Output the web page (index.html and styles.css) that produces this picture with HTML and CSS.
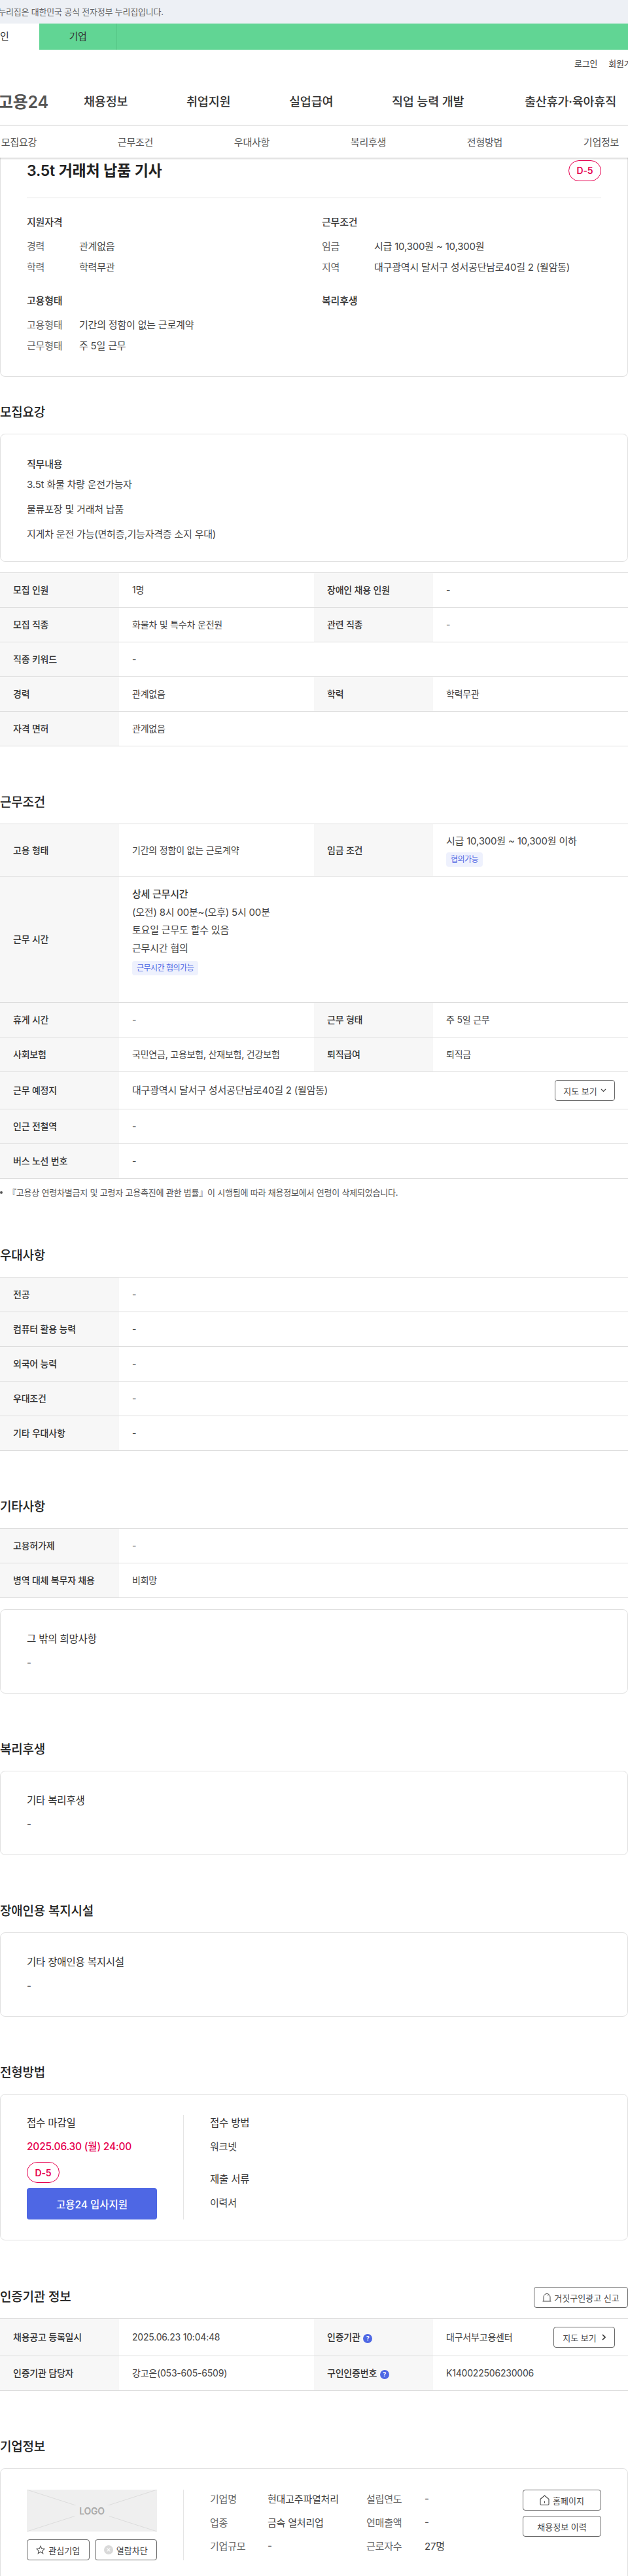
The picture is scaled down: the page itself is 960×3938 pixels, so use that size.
FILE: index.html
```html
<!DOCTYPE html>
<html lang="ko">
<head>
    <meta charset="UTF-8">
    <meta name="viewport" content="width=device-width, initial-scale=1.0">
    <title>3.5t 거래처 납품 기사 - 고용24</title>
    <link rel="stylesheet" href="styles.css">
</head>
<body>
    <div class="gov-bar"><span>이 누리집은 대한민국 공식 전자정부 누리집입니다.</span></div>

    <div class="user-tabs">
        <a class="user-tab active">개인</a>
        <a class="user-tab">기업</a>
    </div>

    <div class="util-links">
        <a>로그인</a>
        <a>회원가입</a>
    </div>

    <div class="gnb">
        <a class="logo">고용24</a>
        <a>채용정보</a>
        <a>취업지원</a>
        <a>실업급여</a>
        <a>직업 능력 개발</a>
        <a>출산휴가·육아휴직</a>
    </div>

    <div class="anchor-tabs">
        <a>모집요강</a>
        <a>근무조건</a>
        <a>우대사항</a>
        <a>복리후생</a>
        <a>전형방법</a>
        <a>기업정보</a>
    </div>

    <div class="card summary">
        <div class="summary-head">
            <h2>3.5t 거래처 납품 기사</h2>
            <span class="dday">D-5</span>
        </div>
        <div class="summary-grid">
            <div class="summary-block">
                <h3>지원자격</h3>
                <dl>
                    <dt>경력</dt><dd>관계없음</dd>
                    <dt>학력</dt><dd>학력무관</dd>
                </dl>
            </div>
            <div class="summary-block">
                <h3>근무조건</h3>
                <dl>
                    <dt>임금</dt><dd>시급 10,300원 ~ 10,300원</dd>
                    <dt>지역</dt><dd>대구광역시 달서구 성서공단남로40길 2 (월암동)</dd>
                </dl>
            </div>
            <div class="summary-block">
                <h3>고용형태</h3>
                <dl>
                    <dt>고용형태</dt><dd>기간의 정함이 없는 근로계약</dd>
                    <dt>근무형태</dt><dd>주 5일 근무</dd>
                </dl>
            </div>
            <div class="summary-block">
                <h3>복리후생</h3>
            </div>
        </div>
    </div>

    <section class="section s-recruit">
        <h2 class="section-title">모집요강</h2>
        <div class="card job-desc">
            <h4>직무내용</h4>
            <p>3.5t 화물 차량 운전가능자</p>
            <p>물류포장 및 거래처 납품</p>
            <p>지게차 운전 가능(면허증,기능자격증 소지 우대)</p>
        </div>
        <table class="info-table after-card">
            <colgroup><col class="col-th"><col class="col-td"><col class="col-th"><col class="col-td"></colgroup>
            <tr><th>모집 인원</th><td>1명</td><th>장애인 채용 인원</th><td>-</td></tr>
            <tr><th>모집 직종</th><td>화물차 및 특수차 운전원</td><th>관련 직종</th><td>-</td></tr>
            <tr><th>직종 키워드</th><td colspan="3">-</td></tr>
            <tr><th>경력</th><td>관계없음</td><th>학력</th><td>학력무관</td></tr>
            <tr><th>자격 면허</th><td colspan="3">관계없음</td></tr>
        </table>
    </section>

    <section class="section">
        <h2 class="section-title">근무조건</h2>
        <table class="info-table">
            <colgroup><col class="col-th"><col class="col-td"><col class="col-th"><col class="col-td"></colgroup>
            <tr class="row-pay">
                <th>고용 형태</th>
                <td>기간의 정함이 없는 근로계약</td>
                <th>임금 조건</th>
                <td><span class="big">시급 10,300원 ~ 10,300원 이하</span><span class="tag">협의가능</span></td>
            </tr>
            <tr class="row-hours">
                <th>근무 시간</th>
                <td colspan="3">
                    <strong>상세 근무시간</strong>
                    <div>(오전) 8시 00분~(오후) 5시 00분</div>
                    <div>토요일 근무도 할수 있음</div>
                    <div>근무시간 협의</div>
                    <span class="tag">근무시간 협의가능</span>
                </td>
            </tr>
            <tr><th>휴게 시간</th><td>-</td><th>근무 형태</th><td>주 5일 근무</td></tr>
            <tr><th>사회보험</th><td>국민연금, 고용보험, 산재보험, 건강보험</td><th>퇴직급여</th><td>퇴직금</td></tr>
            <tr class="row-place">
                <th>근무 예정지</th>
                <td colspan="3">
                    <div class="with-btn">
                        <span class="big">대구광역시 달서구 성서공단남로40길 2 (월암동)</span>
                        <button class="btn map-open">지도 보기
                            <svg width="9" height="6" viewBox="0 0 9 6"><path d="M1 1l3.500 3.500L8 1" fill="none" stroke="#444" stroke-width="1.200"/></svg>
                        </button>
                    </div>
                </td>
            </tr>
            <tr><th>인근 전철역</th><td colspan="3">-</td></tr>
            <tr><th>버스 노선 번호</th><td colspan="3">-</td></tr>
        </table>
        <p class="note">『고용상 연령차별금지 및 고령자 고용촉진에 관한 법률』이 시행됨에 따라 채용정보에서 연령이 삭제되었습니다.</p>
    </section>

    <section class="section">
        <h2 class="section-title">우대사항</h2>
        <table class="info-table">
            <colgroup><col class="col-th"><col class="col-td"><col class="col-th"><col class="col-td"></colgroup>
            <tr><th>전공</th><td colspan="3">-</td></tr>
            <tr><th>컴퓨터 활용 능력</th><td colspan="3">-</td></tr>
            <tr><th>외국어 능력</th><td colspan="3">-</td></tr>
            <tr><th>우대조건</th><td colspan="3">-</td></tr>
            <tr><th>기타 우대사항</th><td colspan="3">-</td></tr>
        </table>
    </section>

    <section class="section">
        <h2 class="section-title">기타사항</h2>
        <table class="info-table">
            <colgroup><col class="col-th"><col class="col-td"><col class="col-th"><col class="col-td"></colgroup>
            <tr><th>고용허가제</th><td colspan="3">-</td></tr>
            <tr><th>병역 대체 복무자 채용</th><td colspan="3">비희망</td></tr>
        </table>
        <div class="card note-card etc-card">
            <h4>그 밖의 희망사항</h4>
            <p>-</p>
        </div>
    </section>

    <section class="section">
        <h2 class="section-title">복리후생</h2>
        <div class="card note-card">
            <h4>기타 복리후생</h4>
            <p>-</p>
        </div>
    </section>

    <section class="section">
        <h2 class="section-title">장애인용 복지시설</h2>
        <div class="card note-card">
            <h4>기타 장애인용 복지시설</h4>
            <p>-</p>
        </div>
    </section>

    <section class="section">
        <h2 class="section-title">전형방법</h2>
        <div class="card apply-card">
            <div class="apply-left">
                <h4>접수 마감일</h4>
                <p class="deadline">2025.06.30 (월) 24:00</p>
                <span class="dday">D-5</span>
                <button class="btn-apply">고용24 입사지원</button>
            </div>
            <div class="apply-right">
                <h4>접수 방법</h4>
                <p>워크넷</p>
                <h4>제출 서류</h4>
                <p>이력서</p>
            </div>
        </div>
    </section>

    <section class="section s-cert">
        <div class="title-row">
            <h2 class="section-title">인증기관 정보</h2>
            <button class="btn report">
                <svg width="14" height="14" viewBox="0 0 14 14"><path d="M2 13V6.500a5 5 0 0 1 10 0V13M0.500 13h13M9.500 3l-1 1.500" fill="none" stroke="#444" stroke-width="1"/></svg>
                거짓구인광고 신고
            </button>
        </div>
        <table class="info-table cert">
            <colgroup><col class="col-th"><col class="col-td"><col class="col-th"><col class="col-td"></colgroup>
            <tr>
                <th>채용공고 등록일시</th>
                <td>2025.06.23 10:04:48</td>
                <th>인증기관 <span class="help">?</span></th>
                <td>
                    <div class="with-btn">
                        <span>대구서부고용센터</span>
                        <button class="btn map-link">지도 보기
                            <svg width="6" height="10" viewBox="0 0 6 10"><path d="M1 1l4 4-4 4" fill="none" stroke="#333" stroke-width="1.600"/></svg>
                        </button>
                    </div>
                </td>
            </tr>
            <tr>
                <th>인증기관 담당자</th>
                <td>강고은(053-605-6509)</td>
                <th>구인인증번호 <span class="help">?</span></th>
                <td>K140022506230006</td>
            </tr>
        </table>
    </section>

    <section class="section">
        <h2 class="section-title">기업정보</h2>
        <div class="card company-card">
            <div class="company-left">
                <div class="logo-box">
                    <svg class="logo-x" viewBox="0 0 199 64" preserveAspectRatio="none"><path d="M0 0L199 64M199 0L0 64" stroke="#dcdcdc" stroke-width="1"/></svg>
                    <span>LOGO</span>
                </div>
                <div class="company-actions">
                    <button class="btn">
                        <svg width="14" height="14" viewBox="0 0 16 16"><path d="M8 1.500l2 4.400 4.800.5-3.600 3.200 1 4.700L8 11.400l-4.200 2.900 1-4.700L1.200 6.400 6 5.900z" fill="none" stroke="#555" stroke-width="1.300"/></svg>
                        관심기업
                    </button>
                    <button class="btn">
                        <svg width="14" height="14" viewBox="0 0 16 16"><circle cx="8" cy="8" r="8" fill="#d9d9d9"/><path d="M5.300 5.300l5.400 5.400M10.700 5.300l-5.400 5.400" stroke="#fff" stroke-width="1.400"/></svg>
                        열람차단
                    </button>
                </div>
            </div>
            <dl class="company-info">
                <dt>기업명</dt><dd>현대고주파열처리</dd>
                <dt>설립연도</dt><dd>-</dd>
                <dt>업종</dt><dd>금속 열처리업</dd>
                <dt>연매출액</dt><dd>-</dd>
                <dt>기업규모</dt><dd>-</dd>
                <dt>근로자수</dt><dd>27명</dd>
            </dl>
            <div class="company-links">
                <button class="btn">
                    <svg width="15" height="16" viewBox="0 0 15 16"><path d="M1 6.500L7.500 1 14 6.500V14a1.200 1.200 0 0 1-1.200 1.200H2.200A1.200 1.200 0 0 1 1 14zM7.500 9.500v3" fill="none" stroke="#444" stroke-width="1.100"/></svg>
                    홈페이지
                </button>
                <button class="btn">채용정보 이력</button>
            </div>
        </div>
    </section>
</body>
</html>
```

FILE: styles.css
```css
* {
    box-sizing: border-box;
}

html,
body {
    margin: 0;
    padding: 0;
    overflow-x: hidden;
}

body {
    width: 960px;
    font-family: Inter, "Noto Sans CJK KR", "Noto Sans", sans-serif;
    font-size: 15px;
    color: #444;
    background-color: #fff;
    letter-spacing: -0.2px;
}

h2,
h3,
h4,
p,
dl,
dd {
    margin: 0;
}

.gov-bar {
    height: 36px;
    line-height: 36px;
    font-size: 13px;
    color: #666;
    background-color: #edf0f5;
    overflow: hidden;
    white-space: nowrap;
}

.gov-bar span {
    margin-left: -18px;
}

.user-tabs {
    display: flex;
    height: 40px;
    margin-left: -60px;
    background-color: #61d594;
}

.user-tab {
    width: 119px;
    line-height: 40px;
    text-align: center;
    border-right: 1px solid #55c585;
    color: #333;
}

.user-tab.active {
    width: 120px;
    background-color: #fff;
    border-right: none;
}

.util-links {
    display: flex;
    gap: 17px;
    height: 40px;
    padding-left: 878px;
    align-items: center;
    font-size: 13px;
    white-space: nowrap;
    overflow: hidden;
}

.gnb {
    display: flex;
    align-items: center;
    height: 76px;
    font-size: 18.500px;
    font-weight: 500;
    color: #333;
    white-space: nowrap;
    border-bottom: 1px solid #e8e8e8;
}

.gnb a {
    width: 157px;
}

.gnb .logo {
    width: 131px;
    margin-left: -3px;
    font-size: 25px;
    font-weight: 600;
    color: #555;
}

.gnb a:nth-child(5) {
    width: 203px;
}

.anchor-tabs {
    position: relative;
    display: grid;
    grid-template-columns: repeat(6, 178px);
    width: 1068px;
    height: 49px;
    margin-left: -60px;
    align-items: center;
    text-align: center;
    color: #555;
    background-color: #fff;
    box-shadow: 0 1px 3px rgba(0, 0, 0, 0.25);
}

.card {
    border: 1px solid #e0e0e0;
    border-radius: 8px;
    background-color: #fff;
}

.summary {
    height: 335px;
    padding: 0 40px;
    border-top: none;
    border-radius: 0 0 8px 8px;
}

.summary-head {
    display: flex;
    justify-content: space-between;
    align-items: center;
    height: 62px;
    padding-bottom: 22px;
    border-bottom: 1px solid #e8e8e8;
}

.summary-head h2 {
    font-size: 23px;
    font-weight: 600;
    line-height: 40px;
    color: #222;
}

.dday {
    display: inline-flex;
    align-items: center;
    justify-content: center;
    width: 50px;
    height: 32px;
    font-size: 14px;
    font-weight: 600;
    color: #e6004f;
    border: 1px solid #e6004f;
    border-radius: 16px;
}

.summary-grid {
    display: grid;
    grid-template-columns: 451px 1fr;
    grid-template-rows: 120px auto;
    padding-top: 26px;
}

.summary-block h3 {
    margin-bottom: 15px;
    font-size: 15px;
    font-weight: 500;
    line-height: 22px;
    color: #333;
}

.summary-block dl {
    display: grid;
    grid-template-columns: 80px 1fr;
    row-gap: 10px;
    line-height: 22px;
}

.summary-block dt {
    color: #666;
}

.section {
    padding-top: 74px;
}

.s-recruit {
    padding-top: 43px;
}

.section-title {
    font-size: 19px;
    font-weight: 500;
    line-height: 24px;
    color: #222;
}

.job-desc {
    height: 196px;
    margin-top: 20px;
    padding: 35px 40px 0;
}

.job-desc h4 {
    font-size: 15px;
    font-weight: 500;
    line-height: 22px;
    color: #333;
}

.note-card h4,
.apply-card h4 {
    font-size: 15.500px;
    font-weight: 400;
    line-height: 22px;
    color: #333;
}

.job-desc p {
    margin-top: 16px;
    line-height: 22px;
}

.job-desc h4 + p {
    margin-top: 9px;
}

.info-table {
    width: 960px;
    margin-top: 20px;
    table-layout: fixed;
    border-collapse: collapse;
    border-top: 1px solid #ddd;
    font-size: 14px;
}

.info-table.after-card {
    margin-top: 16px;
}

.col-th {
    width: 182px;
}

.col-td {
    width: 298px;
}

.info-table th,
.info-table td {
    height: 53px;
    padding: 0 20px;
    border-bottom: 1px solid #ddd;
    text-align: left;
    vertical-align: middle;
    line-height: 22px;
}

.info-table th {
    font-weight: 500;
    color: #333;
    background-color: #f7f7f7;
}

.big {
    font-size: 15px;
}

.tag {
    display: block;
    width: fit-content;
    height: 22px;
    padding: 0 7px;
    font-size: 12px;
    line-height: 22px;
    letter-spacing: -0.5px;
    color: #4e67e4;
    background-color: #eef1fd;
    border-radius: 4px;
}

.row-pay th,
.row-pay td {
    height: 80px;
}

.row-pay .tag {
    margin-top: 6px;
}

.info-table .row-hours th {
    height: 193px;
}

.info-table .row-hours td {
    vertical-align: top;
    padding-top: 13px;
    font-size: 15px;
    line-height: 27.700px;
}

.row-hours strong {
    font-weight: 500;
    color: #333;
}

.info-table .row-hours .tag {
    margin-top: 5px;
    font-size: 12px;
    line-height: 22px;
}

.row-place th,
.row-place td {
    height: 57px;
}

.with-btn {
    display: flex;
    align-items: center;
    justify-content: space-between;
}

.btn {
    display: inline-flex;
    align-items: center;
    justify-content: center;
    gap: 5px;
    height: 32px;
    padding: 0;
    font-family: inherit;
    font-size: 13px;
    letter-spacing: 0;
    color: #444;
    background-color: #fff;
    border: 1px solid #666;
    border-radius: 4px;
    white-space: nowrap;
}

.map-open {
    width: 92px;
}

.map-link {
    width: 94px;
    gap: 8px;
}

.note {
    position: relative;
    margin-top: 10px;
    padding-left: 12px;
    font-size: 13px;
    line-height: 22px;
    color: #555;
}

.note::before {
    content: "";
    position: absolute;
    left: 0;
    top: 9px;
    width: 4px;
    height: 4px;
    border-radius: 50%;
    background-color: #555;
}

.note-card {
    height: 129px;
    margin-top: 20px;
    padding: 34px 40px 0;
}

.note-card p {
    margin-top: 14px;
    line-height: 22px;
}

.etc-card {
    margin-top: 17px;
}

.apply-card {
    display: flex;
    height: 224px;
    margin-top: 20px;
    padding: 31px 40px 0;
}

.apply-left {
    width: 240px;
    height: 160px;
    padding-right: 40px;
    border-right: 1px solid #e5e5e5;
}

.apply-right {
    padding-left: 40px;
}

.apply-card h4 {
    margin-top: 2px;
}

.apply-right p {
    margin: 14px 0 28px;
    line-height: 22px;
}

.deadline {
    margin-top: 14px;
    font-size: 15.500px;
    font-weight: 500;
    line-height: 22px;
    color: #e6004f;
}

.apply-left .dday {
    display: flex;
    margin-top: 12px;
}

.btn-apply {
    display: block;
    width: 199px;
    height: 48px;
    margin-top: 8px;
    font-family: inherit;
    font-size: 15.500px;
    font-weight: 500;
    color: #fff;
    background-color: #4e67e4;
    border: none;
    border-radius: 4px;
}

.s-cert {
    padding-top: 71px;
}

.title-row {
    display: flex;
    justify-content: space-between;
    align-items: center;
}

.report {
    width: 144px;
    gap: 4px;
}

.info-table.cert {
    margin-top: 16px;
}

.cert tr:first-child th,
.cert tr:first-child td {
    height: 57px;
}

.help {
    display: inline-block;
    width: 14px;
    height: 14px;
    margin-left: 1px;
    font-size: 9px;
    font-weight: 700;
    line-height: 14px;
    text-align: center;
    vertical-align: 0;
    color: #fff;
    background-color: #4e67e4;
    border-radius: 50%;
}

.company-card {
    display: flex;
    height: 173px;
    margin-top: 20px;
    padding: 32px 40px 0;
}

.company-left {
    width: 240px;
    height: 108px;
    padding-right: 40px;
    border-right: 1px solid #e5e5e5;
}

.logo-box {
    position: relative;
    display: flex;
    align-items: center;
    justify-content: center;
    height: 64px;
    font-size: 14px;
    font-weight: 600;
    color: #aaa;
    background-color: #efefef;
}

.logo-x {
    position: absolute;
    inset: 0;
    width: 100%;
    height: 100%;
}

.logo-box span {
    position: relative;
    padding: 0 7px;
    background-color: #efefef;
}

.company-actions {
    display: grid;
    grid-template-columns: 1fr 1fr;
    gap: 8px;
    margin-top: 12px;
}

.company-info {
    display: grid;
    grid-template-columns: 88px 151px 89px 1fr;
    grid-auto-rows: 36px;
    align-items: center;
    width: 478px;
    height: 108px;
    margin-top: -5px;
    margin-left: 40px;
}

.company-info dt {
    color: #666;
}

.company-links {
    display: flex;
    flex-direction: column;
    gap: 8px;
    width: 120px;
    margin-left: auto;
}

.company-links .btn {
    width: 120px;
}
```
